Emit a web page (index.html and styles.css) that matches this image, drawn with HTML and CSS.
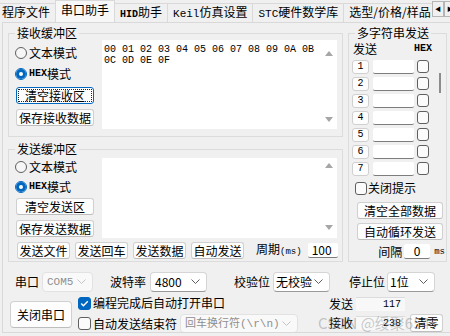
FILE: index.html
```html
<!DOCTYPE html>
<html>
<head>
<meta charset="utf-8">
<title>串口助手</title>
<link rel="stylesheet" href="styles.css">
</head>
<body>
<div class="tabbar">
    <div class="tab-list">
        <div class="tab first">程序文件</div>
        <div class="tab active">串口助手</div>
        <div class="tab"><span class="hex">HID</span>助手</div>
        <div class="tab"><span class="mono">Keil</span>仿真设置</div>
        <div class="tab"><span class="mono">STC</span>硬件数学库</div>
        <div class="tab">选型/价格/样品</div>
    </div>
    <div class="tab-arrows">
        <span class="arrow-btn">&#9664;</span>
        <span class="arrow-btn">&#9654;</span>
    </div>
</div>

<div class="panel">
    <div class="top">
        <div class="buffers">
            <div class="group recv">
                <div class="group-title">接收缓冲区</div>
                <div class="buf-body">
                    <div class="buf-side">
                        <div class="radio"><span class="dot"></span>文本模式</div>
                        <div class="radio"><span class="dot on"></span><span class="hex">HEX</span>模式</div>
                        <div class="btn focus"><span>清空接收区</span></div>
                        <div class="btn">保存接收数据</div>
                    </div>
                    <div class="textbox">
                        <div class="hexdump">00 01 02 03 04 05 06 07 08 09 0A 0B<br>0C 0D 0E 0F</div>
                        <div class="vscroll"><span class="arrow-up"></span><span class="arrow-down"></span></div>
                    </div>
                </div>
            </div>

            <div class="group send">
                <div class="group-title">发送缓冲区</div>
                <div class="buf-body">
                    <div class="buf-side">
                        <div class="radio"><span class="dot"></span>文本模式</div>
                        <div class="radio"><span class="dot on"></span><span class="hex">HEX</span>模式</div>
                        <div class="btn">清空发送区</div>
                        <div class="btn">保存发送数据</div>
                    </div>
                    <div class="textbox">
                        <div class="hexdump"></div>
                        <div class="vscroll"><span class="arrow-up"></span><span class="arrow-down"></span></div>
                    </div>
                </div>
                <div class="send-bar">
                    <div class="btn">发送文件</div>
                    <div class="btn">发送回车</div>
                    <div class="btn">发送数据</div>
                    <div class="btn">自动发送</div>
                    <span class="period">周期<span class="small-mono">(ms)</span></span>
                    <div class="edit period-edit">100</div>
                </div>
            </div>
        </div>

        <div class="group multi">
            <div class="group-title">多字符串发送</div>
            <div class="multi-head"><span>发送</span><span class="hex">HEX</span></div>
            <div class="multi-list">
                <div class="multi-rows">
                    <div class="mrow"><span class="num">1</span><span class="mfield"></span><span class="box"></span></div>
                    <div class="mrow"><span class="num">2</span><span class="mfield"></span><span class="box"></span></div>
                    <div class="mrow"><span class="num">3</span><span class="mfield"></span><span class="box"></span></div>
                    <div class="mrow"><span class="num">4</span><span class="mfield"></span><span class="box"></span></div>
                    <div class="mrow"><span class="num">5</span><span class="mfield"></span><span class="box"></span></div>
                    <div class="mrow"><span class="num">6</span><span class="mfield"></span><span class="box"></span></div>
                    <div class="mrow"><span class="num">7</span><span class="mfield"></span><span class="box"></span></div>
                </div>
                <div class="multi-scroll"><span class="thumb"></span></div>
            </div>
            <div class="mcheck-row"><span class="box"></span>关闭提示</div>
            <div class="btn wide first-wide">清空全部数据</div>
            <div class="btn wide">自动循环发送</div>
            <div class="interval-row">间隔<div class="edit interval-edit">0</div><span class="small-mono">ms</span></div>
        </div>
    </div>

    <div class="port-row">
        <span>串口</span>
        <div class="combo disabled combo-com"><span class="mono-sm">COM5</span>
            <svg width="9" height="6" viewBox="0 0 9 6"><polyline points="0.5,0.5 4.5,4.5 8.5,0.5" fill="none" stroke="#c4c4c4" stroke-width="1"/></svg></div>
        <span class="lbl-baud">波特率</span>
        <div class="combo combo-baud">4800
            <svg width="9" height="6" viewBox="0 0 9 6"><polyline points="0.5,0.5 4.5,4.5 8.5,0.5" fill="none" stroke="#606060" stroke-width="1"/></svg></div>
        <span class="lbl-parity">校验位</span>
        <div class="combo combo-parity">无校验
            <svg width="9" height="6" viewBox="0 0 9 6"><polyline points="0.5,0.5 4.5,4.5 8.5,0.5" fill="none" stroke="#606060" stroke-width="1"/></svg></div>
        <span class="lbl-stop">停止位</span>
        <div class="combo combo-stop">1位
            <svg width="9" height="6" viewBox="0 0 9 6"><polyline points="0.5,0.5 4.5,4.5 8.5,0.5" fill="none" stroke="#606060" stroke-width="1"/></svg></div>
    </div>

    <div class="bottom-row">
        <div class="btn big">关闭串口</div>
        <div class="open-checks">
            <div class="chk-row">
                <span class="box checked"><svg width="11" height="11" viewBox="0 0 11 11"><polyline points="2.2,5.6 4.4,7.8 8.8,3.2" fill="none" stroke="#fff" stroke-width="1.4"/></svg></span>编程完成后自动打开串口
            </div>
            <div class="chk-row second">
                <span class="box"></span>自动发送结束符
                <div class="combo disabled combo-end"><span class="mono-sm">回车换行符(\r\n)</span>
                    <svg width="9" height="6" viewBox="0 0 9 6"><polyline points="0.5,0.5 4.5,4.5 8.5,0.5" fill="none" stroke="#c4c4c4" stroke-width="1"/></svg></div>
            </div>
        </div>
        <div class="counters">
            <div class="count-row"><span class="count-lbl">发送</span><span class="count">117</span></div>
            <div class="count-row second"><span class="count-lbl">接收</span><span class="count">238</span><div class="btn clear">清零</div></div>
        </div>
    </div>
</div>

<div class="watermark">CSDN @绥聚654</div>
</body>
</html>
```

FILE: styles.css
```css
* {
    box-sizing: border-box;
}

body {
    margin: 0;
    width: 450px;
    height: 336px;
    overflow: hidden;
    position: relative;
    background: #f0f0f0;
    color: #000;
    font: 12px/14px "Noto Sans CJK SC", "Microsoft YaHei", sans-serif;
}

.mono {
    font-family: "Liberation Mono", monospace;
    font-size: 11px;
}

.hex {
    font-family: "Liberation Mono", monospace;
    font-size: 10px;
    font-weight: bold;
}

.small-mono {
    font-family: "Liberation Mono", monospace;
    font-size: 9px;
}

.mono-sm {
    font-family: "Liberation Mono", "Noto Sans CJK SC", monospace;
    font-size: 11px;
}

/* tab strip */
.tabbar {
    display: flex;
    height: 22px;
}

.tab-list {
    display: flex;
    align-items: flex-end;
    flex: 1;
    overflow: hidden;
}

.tab {
    flex-shrink: 0;
    height: 19px;
    line-height: 15px;
    padding: 0 5px;
    border: 1px solid #d9d9d9;
    border-bottom: none;
    margin-right: -1px;
    white-space: nowrap;
}

.tab.first {
    margin-left: -4px;
}

.tab.active {
    height: 22px;
    line-height: 17px;
    background: #f7f7f7;
}

.tab-arrows {
    display: flex;
    width: 18px;
    flex-shrink: 0;
    overflow: hidden;
    padding-top: 1px;
}

.arrow-btn {
    flex-shrink: 0;
    width: 12px;
    height: 16px;
    border: 1px solid #b5b5b5;
    background: #f0f0f0;
    font-size: 6px;
    line-height: 14px;
    text-align: center;
}

/* main page */
.panel {
    width: 460px;
    height: 311px;
    margin-left: 2px;
    border: 1px solid #d9d9d9;
    padding: 10px 0 0 5px;
    overflow: hidden;
}

.top {
    display: flex;
    gap: 5px;
}

.buffers {
    width: 335px;
}

.group {
    border: 1px solid #dcdcdc;
}

.group-title {
    display: table;
    margin: -8px 0 0 6px;
    padding: 0 2px;
    background: #f0f0f0;
    line-height: 14px;
}

.recv {
    height: 104px;
}

.send {
    height: 113px;
    margin-top: 12px;
}

.buf-body {
    display: flex;
    padding-left: 7px;
}

.buf-side {
    width: 86px;
    display: flex;
    flex-direction: column;
    align-items: flex-start;
}

.recv .buf-side {
    padding-top: 6px;
}

.send .buf-side {
    padding-top: 4px;
}

.radio {
    display: flex;
    align-items: center;
    height: 14px;
    margin-left: -1px;
}

.recv .radio + .radio {
    margin-top: 7px;
}

.send .radio + .radio {
    margin-top: 6px;
}

.dot {
    width: 12px;
    height: 12px;
    margin-right: 2px;
    border: 1px solid #5f5f5f;
    border-radius: 50%;
    background: #f6f6f6;
}

.dot.on {
    border-color: #0067c0;
    background: #fff;
    box-shadow: inset 0 0 0 3px #0067c0;
}

.btn {
    height: 17px;
    line-height: 15px;
    border: 1px solid #d0d0d0;
    border-bottom-color: #bdbdbd;
    border-radius: 3px;
    background: #fdfdfd;
    text-align: center;
    white-space: nowrap;
}

.buf-side .btn {
    width: 78px;
    margin-top: 5px;
}

.recv .radio + .btn {
    margin-top: 6px;
}

.send .radio + .btn {
    margin-top: 4px;
}

.btn.focus {
    border-color: #0067c0;
    padding: 1px;
}

.btn.focus span {
    display: block;
    height: 13px;
    line-height: 11px;
    border: 1px dotted #222;
}

.textbox {
    display: flex;
    width: 235px;
    height: 89px;
    background: #fff;
}

.send .textbox {
    height: 80px;
    margin-top: 2px;
}

.hexdump {
    flex: 1;
    padding: 4px 0 0 2px;
    font: 10px/11px "Liberation Mono", monospace;
}

.vscroll {
    width: 17px;
    display: flex;
    flex-direction: column;
    justify-content: space-between;
    align-items: center;
    padding: 11px 0 7px;
}

.send .vscroll {
    padding-top: 5px;
    padding-bottom: 8px;
}

.arrow-up, .arrow-down {
    width: 0;
    height: 0;
    border-left: 4px solid transparent;
    border-right: 4px solid transparent;
}

.arrow-up {
    border-bottom: 5px solid #a6a6a6;
}

.arrow-down {
    border-top: 5px solid #a6a6a6;
}

.send-bar {
    display: flex;
    align-items: center;
    gap: 5px;
    margin-top: 4px;
    padding-left: 8px;
}

.send-bar .btn {
    width: 53px;
}

.period {
    margin-left: 7px;
}

.edit {
    height: 15px;
    line-height: 14px;
    background: #fff;
    border-bottom: 1px solid #7d7d7d;
    border-radius: 2px;
}

.period-edit {
    width: 30px;
    margin-left: 1px;
    padding-left: 4px;
}

/* multi string panel */
.multi {
    width: 99px;
    height: 229px;
}

.multi-head {
    display: flex;
    justify-content: space-between;
    align-items: center;
    height: 16px;
    padding: 1px 14px 0 4px;
}

.multi-list {
    display: flex;
    margin-top: 2px;
    padding-left: 3px;
}

.mrow {
    display: flex;
    align-items: center;
    height: 17px;
}

.num {
    width: 17px;
    height: 14px;
    border: 1px solid #d0d0d0;
    border-radius: 3px;
    background: #fdfdfd;
    font: 10px/12px "Liberation Mono", monospace;
    text-align: center;
}

.mfield {
    width: 41px;
    height: 14px;
    margin-left: 4px;
    background: #fff;
    border-bottom: 1px solid #7d7d7d;
    border-radius: 2px;
}

.box {
    flex-shrink: 0;
    width: 12px;
    height: 13px;
    border: 1px solid #5f5f5f;
    border-radius: 3px;
    background: #fbfbfb;
}

.mrow .box {
    margin-left: 3px;
}

.multi-scroll {
    width: 8px;
    margin-left: 8px;
}

.thumb {
    display: block;
    width: 2px;
    height: 20px;
    margin: 15px 0 0 2px;
    background: #8c8c8c;
}

.mcheck-row {
    display: flex;
    align-items: center;
    gap: 1px;
    height: 14px;
    margin: 4px 0 0 6px;
}

.btn.wide {
    width: 86px;
    margin: 4px 0 0 8px;
}

.btn.first-wide {
    margin-top: 7px;
}

.interval-row {
    display: flex;
    align-items: center;
    justify-content: flex-end;
    height: 15px;
    margin-top: 4px;
    padding-right: 1px;
}

.interval-edit {
    width: 26px;
    margin: 0 4px 0 2px;
    text-align: center;
}

/* port settings */
.port-row {
    display: flex;
    align-items: center;
    height: 20px;
    margin-top: 10px;
    padding-left: 7px;
}

.combo {
    display: flex;
    align-items: center;
    justify-content: space-between;
    height: 20px;
    padding: 0 6px 0 4px;
    background: #fff;
    border: 1px solid #d5d5d5;
    border-bottom-color: #9a9a9a;
    border-radius: 4px;
}

.combo.disabled {
    background: #f9f9f9;
    color: #8f8f8f;
    border-color: #e2e2e2;
}

.combo-com {
    width: 51px;
    margin-left: 3px;
}

.lbl-baud {
    margin-left: 17px;
}

.combo-baud {
    width: 57px;
    margin-left: 4px;
}

.lbl-parity {
    margin-left: 27px;
}

.combo-parity {
    width: 57px;
    margin-left: 3px;
    padding-left: 2px;
}

.lbl-stop {
    margin-left: 19px;
}

.combo-stop {
    width: 48px;
    margin-left: 2px;
    padding-left: 2px;
}

.bottom-row {
    display: flex;
    align-items: flex-start;
    margin-top: 4px;
    padding-left: 2px;
}

.btn.big {
    width: 62px;
    height: 27px;
    line-height: 25px;
    margin-top: 5px;
    border-radius: 4px;
}

.open-checks {
    margin-left: 6px;
}

.chk-row {
    display: flex;
    align-items: center;
    gap: 2px;
    height: 14px;
}

.chk-row.second {
    height: 19px;
    margin-top: 4px;
}

.chk-row .box {
    width: 13px;
}

.box.checked {
    background: #0067c0;
    border-color: #0067c0;
    padding: 0;
}

.box.checked svg {
    display: block;
}

.combo-end {
    width: 118px;
    height: 19px;
    margin-left: 1px;
}

.counters {
    margin-left: 30px;
}

.count-row {
    display: flex;
    align-items: center;
    height: 14px;
    margin-top: 1px;
}

.count-row.second {
    height: 18px;
    margin-top: 3px;
}

.count-lbl {
    width: 25px;
    text-align: right;
}

.count {
    width: 49px;
    height: 14px;
    margin-left: 3px;
    padding-right: 4px;
    background: #f8f8f8;
    border-top: 1px solid #dcdcdc;
    font: 10px/13px "Liberation Mono", monospace;
    text-align: right;
}

.btn.clear {
    width: 33px;
    height: 18px;
    margin-left: 5px;
}

.watermark {
    position: absolute;
    left: 318px;
    top: 313px;
    font: 15px/20px "Noto Sans CJK SC", sans-serif;
    color: rgba(120, 120, 120, 0.4);
    white-space: nowrap;
}
```
